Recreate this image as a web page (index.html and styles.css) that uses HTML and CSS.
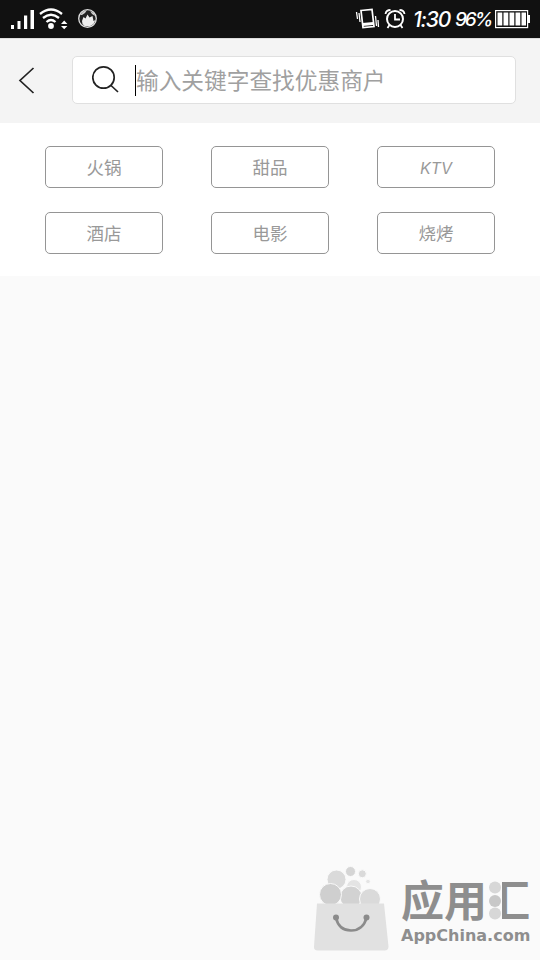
FILE: index.html
```
<!DOCTYPE html>
<html lang="zh-CN">
<head>
<meta charset="utf-8">
<title>搜索</title>
<link rel="stylesheet" href="styles.css">
</head>
<body>
<div class="statusbar">
  <svg class="signals" width="100" height="38" viewBox="0 0 100 38">
    <g fill="#fff">
      <rect x="11" y="25" width="3" height="4"/><rect x="17.500" y="21" width="3" height="8"/><rect x="24" y="15.500" width="3.200" height="13.500"/><rect x="30.500" y="10" width="3.500" height="19"/>
      <circle cx="51" cy="26" r="2.900"/>
      <path d="M61 24l3.200-3.500 3.200 3.500zM61 26h6.400l-3.200 3.300z"/>
    </g>
    <g fill="none" stroke="#fff" stroke-width="2.300">
      <path d="M40 14q11-9 22 0M43 18q8-6.500 16 0M46.500 22q4.500-4 9 0"/>
    </g>
    <circle cx="87.500" cy="18.500" r="8.800" fill="#222" stroke="#ddd" stroke-width="1.300"/>
    <path d="M82 21l1.500-4 2 1.500 2-4 2 3 3-1.500 1 5 2-1-2 4-4 2.500-5-.5-2-2z" fill="#eee"/>
    <path d="M80 15l3-3.500 4-1.500-2 3-3 2zM90 11l4 2 1 3-3-2z" fill="#ccc"/>
  </svg>
  <svg class="indicators" width="56" height="38" viewBox="352 0 56 38">
    <g fill="none" stroke="#fff">
      <path d="M361 10.500l11-1 2 17-11 1z" stroke-width="1.700"/>
      <path d="M362.500 24.500l11-1" stroke-width="3"/>
      <path d="M356.500 12l1 7M359 13l1 9M375.500 16l1 10M378 20l.5 7" stroke-width="1.300"/>
      <circle cx="395" cy="19" r="8" stroke-width="2"/>
      <path d="M395 14v5.500h5M385.500 14q.5-4 5-4M399.500 10q4.500 0 5 4M389.500 25l-2 3M400.500 25l2 3" stroke-width="1.800"/>
    </g>
  </svg>
  <span class="clock">1:30</span>
  <span class="percent">96%</span>
  <svg class="battery" width="38" height="38" viewBox="493 0 38 38">
    <rect x="495.600" y="10.600" width="32" height="17" fill="none" stroke="#fff" stroke-width="1.200"/>
    <path d="M528 15h2v8h-2z" fill="#fff"/>
    <path d="M497.500 12.500h4.800v13h-4.800zM503.500 12.500h4.800v13h-4.800zM509.500 12.500h4.800v13h-4.800zM515.500 12.500h4.800v13h-4.800zM521.500 12.500h4.500v13h-4.500z" fill="#fff"/>
  </svg>
</div>
<header class="header">
  <svg class="back" width="20" height="30" viewBox="0 0 20 30"><path d="M15.500 3L2 15.500 15.500 28" fill="none" stroke="#222" stroke-width="1.700"/></svg>
  <div class="search">
    <svg width="30" height="30" viewBox="1 0.500 30 30"><g fill="none" stroke="#222" stroke-width="1.700"><circle cx="12.500" cy="13" r="10.700"/><path d="M19.500 20.500l7.500 7"/></g></svg>
    <span class="caret"></span>
    <span class="hint">输入关键字查找优惠商户</span>
  </div>
</header>
<main class="tags">
  <div class="tag">火锅</div>
  <div class="tag">甜品</div>
  <div class="tag latin">KTV</div>
  <div class="tag">酒店</div>
  <div class="tag">电影</div>
  <div class="tag">烧烤</div>
</main>
<footer class="watermark">
  <svg class="bag" width="80" height="90" viewBox="311 864 80 90">
    <g stroke="#fafafa" stroke-width="1">
      <circle cx="336.500" cy="879.500" r="9.500" fill="#dadada"/><circle cx="354" cy="887" r="7.500" fill="#e4e4e4"/>
      <circle cx="350.500" cy="871.500" r="5" fill="#d5d5d5"/><circle cx="362.300" cy="873.800" r="4" fill="#dadada"/><circle cx="368" cy="881.500" r="2.300" fill="#e4e4e4"/>
      <circle cx="351" cy="897" r="11" fill="#d2d2d2"/><circle cx="370" cy="899" r="10.500" fill="#dadada"/><circle cx="330.500" cy="894.500" r="11" fill="#cfcfcf"/>
    </g>
    <path d="M317 903.500h67l4.500 43q0 4-4 4h-66.500q-4.500 0-4-4z" fill="#e1e1e1"/>
    <path d="M336 918q3 12.500 15 12.500t15.500-12.500" fill="none" stroke="#8b8b8b" stroke-width="2.700"/>
    <circle cx="336" cy="917.500" r="3" fill="#8b8b8b"/><circle cx="366.500" cy="917.500" r="3" fill="#8b8b8b"/>
  </svg>
  <div class="brand">
    <div class="name">应用<span class="hui">汇<svg class="dots" width="15" height="44" viewBox="0 0 15 44"><path d="M0 0h15v44H0z" fill="#fafafa"/><g fill="#d7d7d7"><circle cx="8" cy="10.500" r="6"/><circle cx="8" cy="24" r="6" fill="#c8c8c8"/><circle cx="8" cy="36.500" r="6"/></g></svg></span></div>
    <div class="site">AppChina.com</div>
  </div>
</footer>
</body>
</html>
```
FILE: styles.css
```
* { box-sizing: border-box; }
body {
  margin: 0;
  width: 540px;
  height: 960px;
  display: flex;
  flex-direction: column;
  overflow: hidden;
  background: #fafafa;
  font-family: "Noto Sans CJK SC", sans-serif;
}
svg { display: block; flex: none; }
.statusbar {
  height: 38px;
  flex: none;
  display: flex;
  align-items: center;
  background: #111;
  color: #fff;
  font: italic 500 21px/38px Inter, sans-serif;
  white-space: nowrap;
}
.indicators { margin-left: 252px; }
.clock { width: 42px; margin-left: 5px; padding-top: 2px; letter-spacing: -1.2px; }
.percent { width: 38px; padding-top: 2px; font-size: 19px; letter-spacing: -2.2px; }
.header {
  height: 85px;
  flex: none;
  display: flex;
  align-items: flex-start;
  padding: 17px 24px 0 18px;
  background: #f4f4f4;
  border-top: 1px solid #ddd;
}
.back { margin-top: 9px; }
.search {
  width: 444px;
  height: 48px;
  margin-left: 34px;
  padding-left: 19px;
  display: flex;
  align-items: center;
  background: #fff;
  border: 1px solid #e0e0e0;
  border-radius: 5px;
}
.caret { width: 1px; height: 31px; margin-left: 13px; background: #000; }
.hint {
  color: #a0a0a0;
  font-size: 22.700px;
  font-weight: 400;
  line-height: 46px;
  white-space: nowrap;
}
.tags {
  height: 153px;
  flex: none;
  display: grid;
  grid-template-columns: repeat(3, 118px);
  grid-auto-rows: 42px;
  gap: 24px 48px;
  padding: 23px 45px 0;
  background: #fff;
}
.tag {
  display: flex;
  align-items: center;
  justify-content: center;
  border: 1px solid #959595;
  border-radius: 5px;
  color: #999;
  font-size: 17.500px;
  font-weight: 400;
  line-height: 24px;
}
.latin { padding: 2px 0 0; font: italic 400 16px Inter, sans-serif; }
.watermark {
  margin-top: auto;
  height: 96px;
  flex: none;
  display: flex;
  padding-left: 311px;
}
.brand { margin: 13px 0 0 10px; color: #8e8e8e; white-space: nowrap; }
.name { height: 48px; font-size: 43px; font-weight: 700; line-height: 43px; }
.hui { position: relative; display: inline-block; }
.dots { position: absolute; left: 0; top: 0; }
.site { font: 700 16px/22px "DejaVu Sans", sans-serif; }
```
